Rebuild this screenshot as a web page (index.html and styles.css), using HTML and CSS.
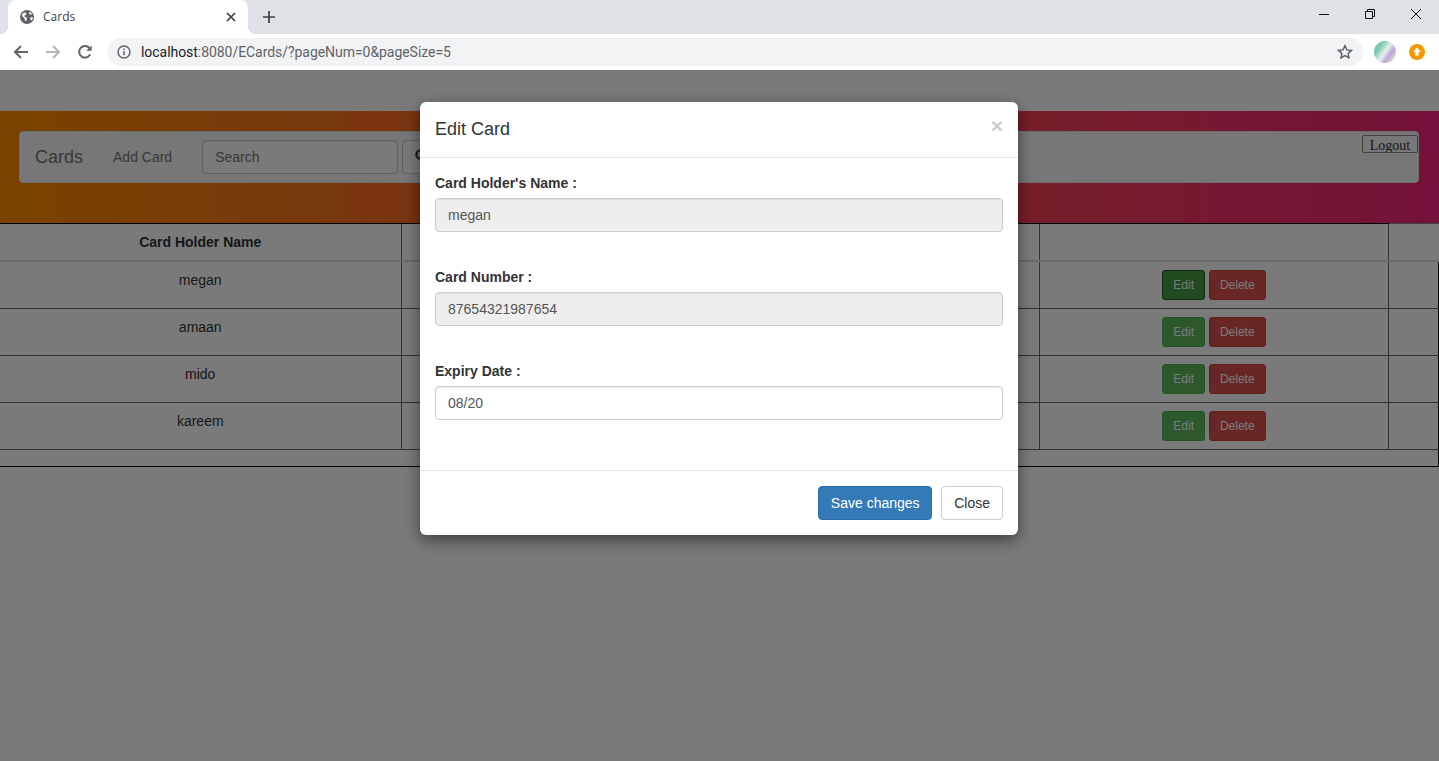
FILE: index.html
```html
<!DOCTYPE html>
<html lang="en">

<head>
    <meta charset="UTF-8">
    <meta name="viewport" content="width=device-width, initial-scale=1.0">
    <title>Cards</title>
    <link rel="stylesheet" href="styles.css">
</head>

<body>
    <div class="browser">
        <div class="tab-strip">
            <div class="tab">
                <svg class="tab-icon" viewBox="0 0 16 16" width="16" height="16">
                    <circle cx="8" cy="8" r="7" fill="#5f6368"/>
                    <path d="M3.4 4.4 6 3.6l1.4 1-.6 1.5-1.4.5.3 1.4 1.8.5.5 1.3-.9 2.2-1.2-.5-.5-2.3-2.3-2.2zM10.4 2.8l2 1.2.6 1.5-1.6.1-1.3-1.1zM11.2 8.4l2.2-.3.4 1.3-1.3 2.1-1.2-1z" fill="#fff"/>
                </svg>
                <span class="tab-title">Cards</span>
                <svg class="tab-close" viewBox="0 0 10 10" width="10" height="10">
                    <path d="M1 1l8 8M9 1l-8 8" stroke="#3c4043" stroke-width="1.7" fill="none"/>
                </svg>
            </div>
            <svg class="new-tab" viewBox="0 0 12 12" width="12" height="12">
                <path d="M6 0v12M0 6h12" stroke="#3c4043" stroke-width="1.7" fill="none"/>
            </svg>
            <div class="window-controls">
                <svg viewBox="0 0 12 12" width="12" height="12"><path d="M1 6.5h10" stroke="#111" fill="none"/></svg>
                <svg viewBox="0 0 12 12" width="12" height="12"><path d="M1.5 3.5h7v7h-7zM3.5 3.5v-2h7v7h-2" stroke="#111" fill="none"/></svg>
                <svg viewBox="0 0 12 12" width="12" height="12"><path d="M1 1l10 10M11 1L1 11" stroke="#111" fill="none"/></svg>
            </div>
        </div>
        <div class="toolbar">
            <svg class="nav-icon" viewBox="0 0 16 16" width="16" height="16">
                <path d="M15 8H2M8 2 2 8l6 6" stroke="#5f6368" stroke-width="2" fill="none"/>
            </svg>
            <svg class="nav-icon" viewBox="0 0 16 16" width="16" height="16">
                <path d="M1 8h13M8 2l6 6-6 6" stroke="#b4b6b9" stroke-width="2" fill="none"/>
            </svg>
            <svg class="nav-icon" viewBox="0 0 16 16" width="16" height="16">
                <path d="M13.2 10.4A5.8 5.8 0 1 1 12.4 4" stroke="#5f6368" stroke-width="2" fill="none"/>
                <path d="M14.6 1.4v5.4H9.2z" fill="#5f6368"/>
            </svg>
            <div class="omnibox">
                <svg class="info-icon" viewBox="0 0 14 14" width="14" height="14">
                    <circle cx="7" cy="7" r="6" stroke="#5f6368" stroke-width="1.4" fill="none"/>
                    <path d="M7 6v4.2M7 3.5v1.5" stroke="#5f6368" stroke-width="1.5" fill="none"/>
                </svg>
                <span class="url"><span class="url-host">localhost</span>:8080/ECards/?pageNum=0&amp;pageSize=5</span>
                <svg class="star-icon" viewBox="0 0 16 16" width="16" height="16">
                    <path d="M8 1.8l1.9 4.1 4.5.5-3.3 3 .9 4.4L8 11.6l-4 2.2.9-4.4-3.3-3 4.5-.5z" stroke="#5f6368" stroke-width="1.5" fill="none"/>
                </svg>
            </div>
            <div class="avatar"></div>
            <svg class="update-icon" viewBox="0 0 16 16" width="16" height="16">
                <circle cx="8" cy="8" r="8" fill="#f29900"/>
                <path d="M8 3.6 12 8H9.6v3.6H6.4V8H4z" fill="#fff"/>
            </svg>
        </div>
    </div>

    <div class="page">
        <div class="banner">
            <nav class="navbar">
                <a class="brand">Cards</a>
                <a class="nav-link">Add Card</a>
                <input class="form-control search-input" type="text" placeholder="Search">
                <button class="search-btn" type="button">
                    <svg viewBox="0 0 14 14" width="14" height="14">
                        <circle cx="5.6" cy="5.6" r="4.2" stroke="#333" stroke-width="2.2" fill="none"/>
                        <path d="M8.8 8.8l4 4" stroke="#333" stroke-width="2.4" fill="none"/>
                    </svg>
                </button>
                <button class="logout" type="button">Logout</button>
            </nav>
        </div>

        <table class="cards-table">
            <colgroup>
                <col class="col-name">
                <col class="col-number">
                <col class="col-actions">
                <col>
            </colgroup>
            <thead>
                <tr>
                    <th>Card Holder Name</th>
                    <th></th>
                    <th></th>
                    <th></th>
                </tr>
            </thead>
            <tbody>
                <tr>
                    <td>megan</td>
                    <td></td>
                    <td><button class="btn-sm btn-edit btn-focus">Edit</button> <button class="btn-sm btn-delete">Delete</button></td>
                    <td></td>
                </tr>
                <tr>
                    <td>amaan</td>
                    <td></td>
                    <td><button class="btn-sm btn-edit">Edit</button> <button class="btn-sm btn-delete">Delete</button></td>
                    <td></td>
                </tr>
                <tr>
                    <td>mido</td>
                    <td></td>
                    <td><button class="btn-sm btn-edit">Edit</button> <button class="btn-sm btn-delete">Delete</button></td>
                    <td></td>
                </tr>
                <tr>
                    <td>kareem</td>
                    <td></td>
                    <td><button class="btn-sm btn-edit">Edit</button> <button class="btn-sm btn-delete">Delete</button></td>
                    <td></td>
                </tr>
                <tr class="table-end">
                    <td colspan="4"></td>
                </tr>
            </tbody>
        </table>

        <div class="backdrop">
            <div class="modal">
                <div class="modal-header">
                    <h4 class="modal-title">Edit Card</h4>
                    <span class="modal-close">&times;</span>
                </div>
                <form class="modal-body">
                    <div class="form-group">
                        <label for="holder">Card Holder's Name :</label>
                        <input class="form-control" id="holder" type="text" value="megan" disabled>
                    </div>
                    <div class="form-group">
                        <label for="number">Card Number :</label>
                        <input class="form-control" id="number" type="text" value="87654321987654" disabled>
                    </div>
                    <div class="form-group">
                        <label for="expiry">Expiry Date :</label>
                        <input class="form-control" id="expiry" type="text" value="08/20">
                    </div>
                </form>
                <div class="modal-footer">
                    <button class="btn btn-primary" type="button">Save changes</button>
                    <button class="btn btn-default" type="button">Close</button>
                </div>
            </div>
        </div>
    </div>
</body>

</html>
```

FILE: styles.css
```css
* {
    box-sizing: border-box;
}

html,
body {
    height: 100%;
}

body {
    margin: 0;
    display: flex;
    flex-direction: column;
    overflow: hidden;
    font-family: "Liberation Sans", Arial, sans-serif;
    font-size: 14px;
    line-height: 20px;
    color: #333;
    background-color: #fff;
}

/* browser chrome */

.tab-strip {
    display: flex;
    align-items: center;
    height: 34px;
    padding-left: 8px;
    background-color: #dee1e6;
}

.tab {
    position: relative;
    display: flex;
    align-items: center;
    width: 240px;
    height: 34px;
    padding: 0 12px 0 11px;
    background-color: #fff;
    border-radius: 8px 8px 0 0;
}

.tab::before,
.tab::after {
    content: "";
    position: absolute;
    bottom: 0;
    width: 8px;
    height: 8px;
}

.tab::before {
    left: -8px;
    background: radial-gradient(circle at 0 0, #dee1e6 8px, #fff 8.5px);
}

.tab::after {
    right: -8px;
    background: radial-gradient(circle at 100% 0, #dee1e6 8px, #fff 8.5px);
}

.tab-title {
    flex: 1;
    margin-left: 8px;
    font-family: "Open Sans", sans-serif;
    font-size: 12px;
    color: #3c4043;
}

.new-tab {
    margin-left: 15px;
}

.window-controls {
    display: flex;
    gap: 34px;
    margin-left: auto;
    margin-right: 17px;
    margin-top: -6px;
}

.toolbar {
    display: flex;
    align-items: center;
    height: 37px;
    padding-left: 13px;
    padding-bottom: 1px;
    background-color: #fff;
    border-bottom: 1px solid #777;
}

.nav-icon {
    margin-right: 16px;
}

.omnibox {
    display: flex;
    align-items: center;
    width: 1256px;
    height: 28px;
    margin-left: -2px;
    padding: 0 10px;
    background-color: #f1f3f4;
    border-radius: 14px;
}

.url {
    flex: 1;
    margin-left: 10px;
    font-family: "Roboto", sans-serif;
    font-size: 14px;
    letter-spacing: -0.05px;
    color: #5f6368;
}

.url-host {
    color: #202124;
}

.avatar {
    width: 22px;
    height: 22px;
    margin-left: 11px;
    border-radius: 50%;
    background: linear-gradient(125deg, #6fb8a4 0%, #7ccfb4 28%, #e9eef0 50%, #b9a6dc 68%, #e6dcc0 88%);
}

.update-icon {
    margin-left: 13px;
}

/* page */

.page {
    position: relative;
    flex: 1;
    padding-top: 40px;
}

.banner {
    height: 112px;
    padding: 20px 20px 0 19px;
    background: linear-gradient(to right, #ff8c00, #f4247a);
}

.navbar {
    display: flex;
    align-items: flex-start;
    height: 52px;
    padding-left: 15px;
    background-color: #f8f8f8;
    border: 1px solid #e7e7e7;
    border-radius: 4px;
}

.brand {
    margin-top: 15px;
    font-size: 18px;
    color: #777;
}

.nav-link {
    margin-top: 15px;
    margin-left: 30px;
    color: #777;
}

.form-control {
    display: block;
    width: 100%;
    height: 34px;
    padding: 6px 12px;
    font-family: inherit;
    font-size: 14px;
    color: #555;
    background-color: #fff;
    border: 1px solid #ccc;
    border-radius: 4px;
    box-shadow: inset 0 1px 1px rgba(0, 0, 0, .075);
}

.form-control:disabled {
    background-color: #eee;
    opacity: 1;
}

.search-input {
    width: 196px;
    margin-top: 8px;
    margin-left: 30px;
}

.search-btn {
    width: 40px;
    height: 34px;
    margin-top: 8px;
    margin-left: 4px;
    padding: 0;
    background-color: #fff;
    border: 1px solid #ccc;
    border-radius: 4px;
}

.logout {
    width: 56px;
    height: 18px;
    margin-top: 3px;
    margin-left: auto;
    padding: 2px 0 0;
    overflow: hidden;
    font-family: "Liberation Serif", serif;
    font-size: 14px;
    line-height: 16px;
    color: #333;
    background-color: #f8f8f8;
    border: 1px solid #888;
    border-radius: 2px;
}

.cards-table {
    width: 100%;
    table-layout: fixed;
    border-collapse: collapse;
    text-align: center;
}

.col-name {
    width: 401px;
}

.col-number {
    width: 638px;
}

.col-actions {
    width: 349px;
}

.cards-table th {
    padding: 8px;
    border-top: 1px solid #000;
    border-left: 1px solid #666;
    border-bottom: 2px solid #ddd;
}

.cards-table th:last-child {
    border-top-color: #888;
}

.cards-table td {
    height: 47px;
    padding: 8px;
    vertical-align: top;
    border-left: 1px solid #666;
    border-bottom: 1px solid #666;
}

.cards-table th:first-child,
.cards-table td:first-child {
    border-left: none;
}

.cards-table td:last-child {
    border-right: 1px solid #000;
}

.cards-table .table-end td {
    height: 17px;
    padding: 0;
    border-bottom: 1px solid #000;
}

.btn-sm {
    height: 30px;
    padding: 5px 10px;
    font-family: inherit;
    font-size: 12px;
    line-height: 18px;
    color: #fff;
    border: 1px solid transparent;
    border-radius: 3px;
}

.btn-edit {
    margin-left: 1px;
    background-color: #5cb85c;
    border-color: #4cae4c;
}

.btn-focus {
    background-color: #449d44;
    border-color: #255625;
}

.btn-delete {
    background-color: #d9534f;
    border-color: #d43f3a;
}

/* modal */

.backdrop {
    position: absolute;
    top: 0;
    right: 0;
    bottom: 0;
    left: 0;
    display: flex;
    justify-content: center;
    align-items: flex-start;
    padding-top: 31px;
    padding-right: 1px;
    background-color: rgba(0, 0, 0, .52);
}

.modal {
    width: 598px;
    background-color: #fff;
    border-radius: 6px;
    box-shadow: 0 5px 15px rgba(0, 0, 0, .5);
}

.modal-header {
    display: flex;
    justify-content: space-between;
    align-items: flex-start;
    height: 56px;
    padding: 14px 15px;
    border-bottom: 1px solid #e5e5e5;
}

.modal-title {
    margin: 0;
    font-size: 18px;
    font-weight: 500;
    line-height: 26px;
}

.modal-close {
    margin-top: -1px;
    font-size: 21px;
    font-weight: 700;
    line-height: 21px;
    color: #000;
    opacity: .2;
}

.modal-body {
    padding: 15px 15px 0;
}

.form-group {
    padding-bottom: 35px;
}

.form-group label {
    display: block;
    margin-bottom: 5px;
    font-weight: 700;
}

.modal-footer {
    display: flex;
    justify-content: flex-end;
    gap: 9px;
    padding: 15px;
    margin-top: 15px;
    border-top: 1px solid #e5e5e5;
}

.btn {
    height: 34px;
    padding: 6px 12px;
    font-family: inherit;
    font-size: 14px;
    line-height: 20px;
    border: 1px solid transparent;
    border-radius: 4px;
}

.btn-primary {
    width: 114px;
    padding: 6px 0;
    color: #fff;
    background-color: #337ab7;
    border-color: #2e6da4;
}

.btn-default {
    color: #333;
    background-color: #fff;
    border-color: #ccc;
}
```
